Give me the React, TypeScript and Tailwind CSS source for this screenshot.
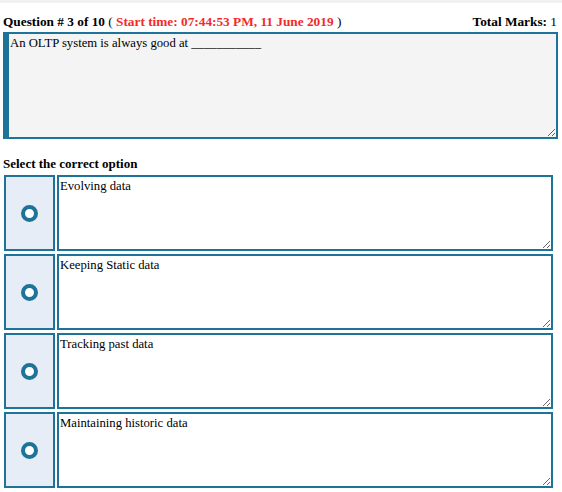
import { useState } from "react";

const options = [
  "Evolving data",
  "Keeping Static data",
  "Tracking past data",
  "Maintaining historic data",
];

export default function App() {
  const [picked, setPicked] = useState<number | null>(null);

  return (
    <div className="font-['Liberation_Serif',serif] text-[13px] text-black bg-white min-h-[492px]">
      <div className="h-[3px] bg-[#f1f1f1]" />
      <div className="flex justify-between items-end px-[3px] h-[26px] leading-[15px] text-[13.3px]">
        <div>
          <span className="font-bold">Question # 3 of 10</span>{" "}
          ( <span className="font-bold text-[#f42a2a]">Start time: 07:44:53 PM, 11 June 2019</span> )
        </div>
        <div className="pr-[2px] text-black">
          <span className="font-bold">Total Marks:</span> <span className="text-black">1</span>
        </div>
      </div>
      <textarea
        readOnly
        defaultValue="An OLTP system is always good at ___________"
        className="block mt-[3px] ml-[3px] w-[555px] h-[107px] border-2 border-l-[6px] border-[#1e7398] bg-[#f4f4f4] px-[1px] py-[2px] font-['Liberation_Serif',serif] text-[12.7px] leading-[15px] text-black outline-none"
      />
      <div className="font-bold px-[3px] mt-[17px] leading-[15px]">Select the correct option</div>
      <div className="flex flex-col gap-[3px] mt-[4px] pl-[4px]">
        {options.map((o, i) => (
          <div key={i} className="flex gap-[2px]">
            <button
              onClick={() => setPicked(i)}
              className="w-[51px] h-[76px] border-2 border-[#1e7398] bg-[#e6edf6] flex items-center justify-center"
            >
              <span
                className={`w-[17px] h-[17px] rounded-full border-[4px] border-[#1e7398] ${picked === i ? "bg-[#1e7398]" : "bg-white"}`}
              />
            </button>
            <textarea
              readOnly
              defaultValue={o}
              className="block w-[496px] h-[76px] border-2 border-[#1e7398] bg-white px-[1px] py-[2px] font-['Liberation_Serif',serif] text-[12.7px] leading-[14px] text-black outline-none"
            />
          </div>
        ))}
      </div>
    </div>
  );
}
